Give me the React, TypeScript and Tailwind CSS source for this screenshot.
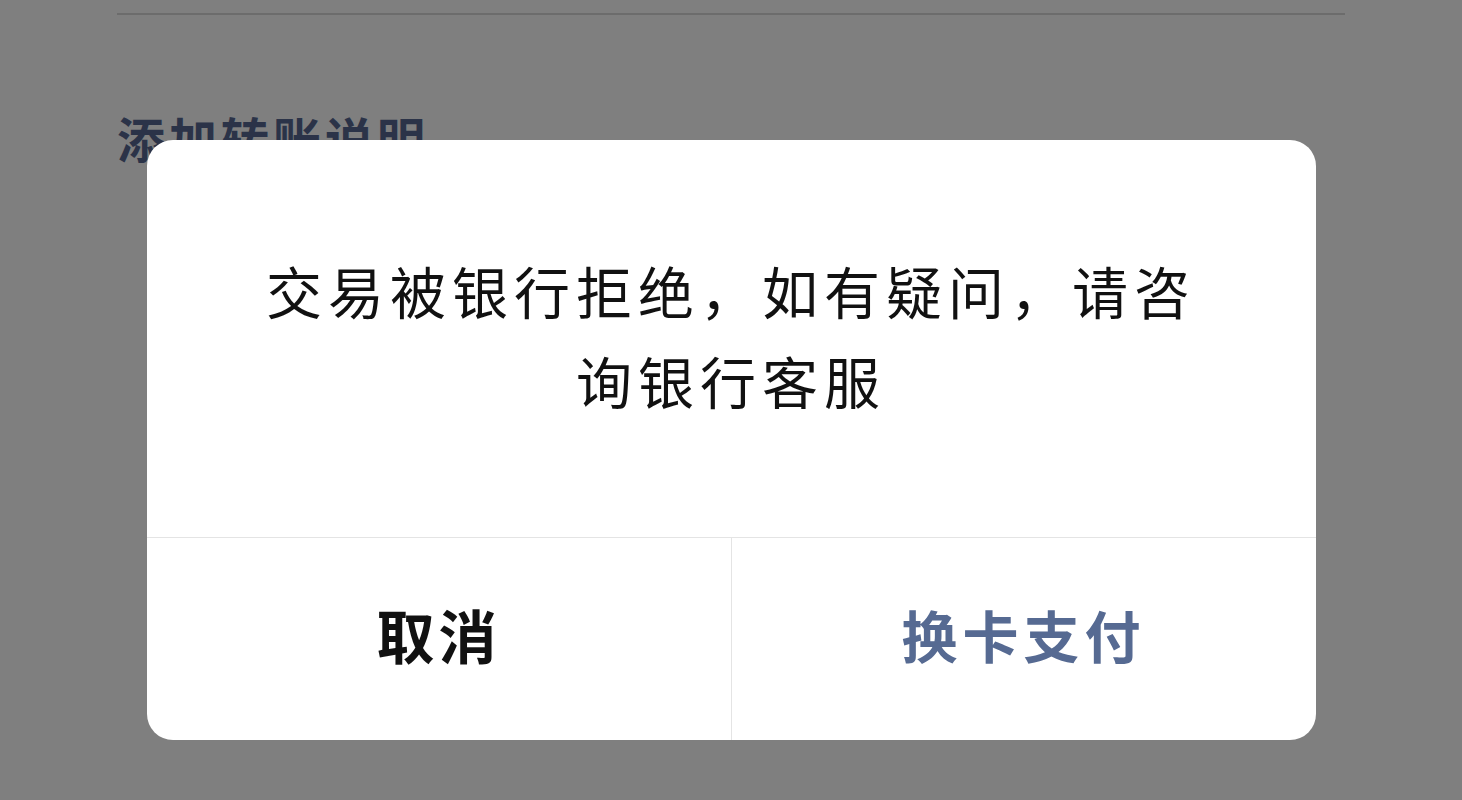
import React from 'react';

const cjk = "font-['Noto_Sans_CJK_SC','Noto_Sans',sans-serif]";

// Dimmed transfer page underneath the dialog
const TransferPage: React.FC = () => (
  <div className="px-[117px]">
    <div className="h-[13px]" />
    <div className="h-[2px] bg-[#6c6c6c] w-[1228px]" />
    <div className={`mt-[94px] text-[48px] leading-[56px] tracking-[4px] font-bold text-[#2b3348] ${cjk}`}>
      添加转账说明
    </div>
  </div>
);

const BankRejectDialog: React.FC = () => (
  <div className="fixed inset-0 flex justify-center pt-[140px]">
    <div className={`w-[1169px] h-[600px] bg-white rounded-[26px] overflow-hidden flex flex-col ${cjk}`}>
      <div className="flex-1 flex items-center justify-center pb-[8px]">
        <p className="w-[960px] text-center text-[56px] leading-[90px] tracking-[6px] text-[#111]">
          交易被银行拒绝，如有疑问，请咨询银行客服
        </p>
      </div>
      <div className="h-[203px] border-t border-[#e4e4e4] flex">
        <button className="flex-1 flex items-center justify-center pb-[10px] text-[58px] font-bold tracking-[4px] text-[#111]">
          取消
        </button>
        <div className="w-px bg-[#e4e4e4]" />
        <button className="flex-1 flex items-center justify-center pb-[10px] text-[56px] font-bold tracking-[5px] text-[#566a92]">
          换卡支付
        </button>
      </div>
    </div>
  </div>
);

export default function App() {
  return (
    <div className="relative w-[1462px] h-[800px] bg-[#7f7f7f] overflow-hidden">
      <TransferPage />
      <BankRejectDialog />
    </div>
  );
}
